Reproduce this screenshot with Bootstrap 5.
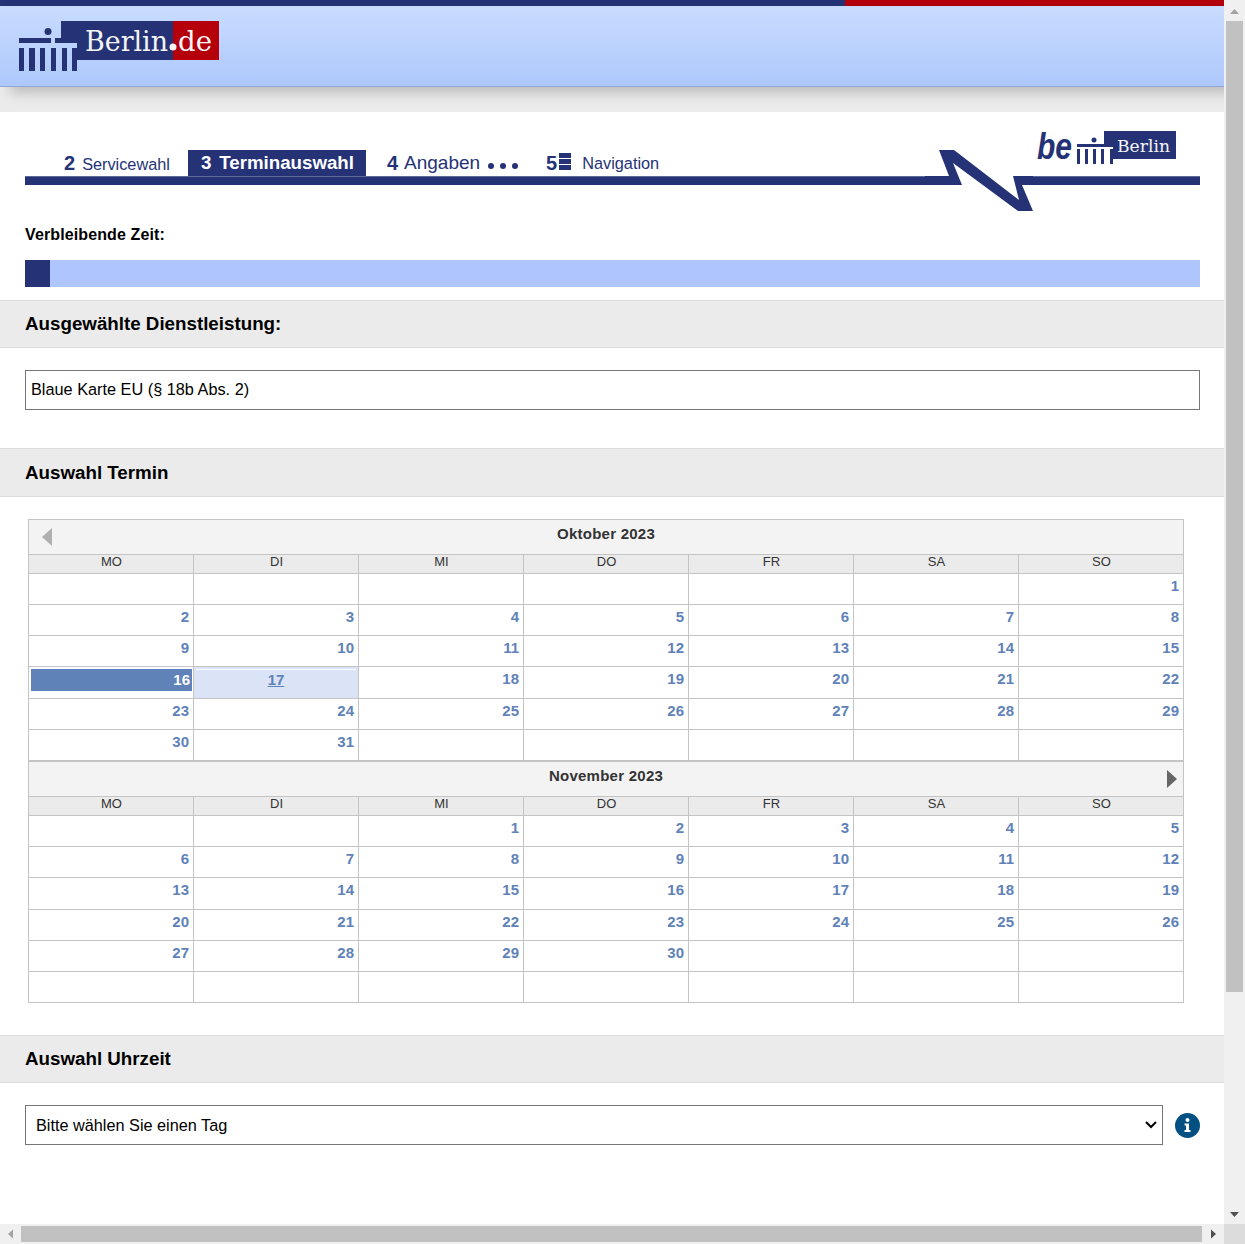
<!DOCTYPE html>
<html lang="de">
<head>
    <meta charset="UTF-8">
    <meta name="viewport" content="width=device-width, initial-scale=1.0">
    <link href="https://cdn.jsdelivr.net/npm/bootstrap@5.3.3/dist/css/bootstrap.min.css" rel="stylesheet">
    <script src="https://cdn.jsdelivr.net/npm/bootstrap@5.3.3/dist/js/bootstrap.bundle.min.js"></script>
    <title>Terminauswahl</title>
    <style>
        html, body { height: 100%; overflow: hidden; }
        body { font-family: "Liberation Sans", Arial, sans-serif; font-size: 16px; color: #000; }
        .shell { width: 1245px; height: 1244px; }
        .viewport { width: 1224px; height: 1224px; overflow: hidden; }

        .vbar { width: 21px; height: 1224px; background: #f0f0f0; }
        .hbar { height: 20px; background: #f0f0f0; }
        .vthumb { width: 17px; height: 971px; margin-left: 2px; background: #c1c1c1; }
        .hthumb { width: 1181px; height: 16px; margin-top: 2px; background: #c1c1c1; }
        .sb-arrow { width: 21px; height: 21px; flex-shrink: 0; }
        .sb-corner { width: 21px; height: 20px; background: #dcdcdc; }

        .stripe { height: 6px; }
        .stripe-blue { width: 845px; background: #253376; }
        .stripe-red { background: #b5000c; }
        .top-head { height: 81px; padding: 15px 0 0 18px; background: linear-gradient(#c9dcff, #adc8fb); border-bottom: 1px solid #8fa8d6; box-shadow: 10px 6px 12px rgba(0,0,0,.2); position: relative; }
        .grey-strip { height: 25px; background: #ebebeb; }

        .steps-area { height: 109px; padding: 38px 24px 0 25px; position: relative; }
        .step-row { height: 26px; padding-left: 39px; color: #253376; white-space: nowrap; }
        .step-num { font-size: 20px; font-weight: 700; line-height: 26px; }
        .step-lbl { font-size: 16.3px; line-height: 28px; }
        .step-active { width: 178px; height: 26px; margin-left: 18px; padding-left: 13px; background: #253376; color: #fff; font-size: 18.7px; font-weight: 700; line-height: 26px; }
        .step-active-txt { margin-left: 8px; }
        .step-big { font-size: 19px; line-height: 26px; }
        .gap-lbl { margin-left: 7px; }
        .gap-four { margin-left: 21px; }
        .gap-ang { margin-left: 6px; }
        .gap-dots { margin-left: 8px; padding-top: 6px; }
        .gap-five { margin-left: 28px; }
        .gap-stack { margin-left: 2px; padding-top: 3px; }
        .gap-nav { margin-left: 11px; line-height: 26px; }
        .dots { gap: 6px; }
        .dots i { display: block; width: 6px; height: 6px; border-radius: 50%; background: #253376; }
        .stack-ico { gap: 1px; width: 12px; }
        .stack-ico i { display: block; height: 5px; background: #253376; }
        .step-line { height: 9px; background: #253376; border-top: 1px solid #5e6a9c; }
        .step-art { position: absolute; left: 920px; top: 8px; }

        .remain-lbl { padding-left: 25px; font-weight: 700; line-height: 20px; margin-top: 4px; letter-spacing: .12px; }
        .remain-bar { height: 27px; margin: 15px 24px 0 25px; background: #aec6fc; }
        .remain-fill { width: 25px; height: 27px; background: #253376; }

        .sect-head { background: #ebebeb; border-top: 1px solid #ddd; border-bottom: 1px solid #ddd; padding: 0 0 0 25px; font-size: 18.75px; font-weight: 700; display: flex; align-items: center; }
        .sect-1 { height: 48px; margin-top: 13px; }
        .sect-2 { height: 49px; margin-top: 38px; padding-top: 2px; }
        .sect-3 { height: 48px; margin-top: 32px; }

        .svc-box { height: 40px; width: 1175px; margin: 22px 0 0 25px; padding: 0 5px 2px; border: 1px solid #767676; border-radius: 0; font-size: 16.3px; color: #000; }
        .cal-wrap { width: 1156px; margin: 22px 0 0 28px; }
        .cal-title { height: 35px; background: #f3f3f3; border: 1px solid #c4c4c4; border-bottom: 0; padding: 0 0 0 13px; }
        .cal-month { font-size: 15px; font-weight: 700; color: #333; letter-spacing: .25px; padding: 0 0 5px 0; margin-right: 23px; }
        .cal-side { width: 10px; }
        .cal-side-r { width: 16px; margin-left: -16px; }
        .cal-table { table-layout: fixed; width: 1156px; border-collapse: collapse; margin: 0; }
        .cal-table th { height: 19px; padding: 0 0 5px 1px; background: #ebebeb; border: 1px solid #c4c4c4; font-size: 13px; font-weight: 400; color: #333; text-align: center; line-height: 12px; }
        .cal-table td { height: 31px; padding: 0 4px 7px 0; border: 1px solid #c4c4c4; text-align: right; vertical-align: middle; font-size: 15px; font-weight: 700; color: #5f82b8; line-height: 16px; }
        .cal-table tr.row-tall td { height: 32px; }
        .cal-table td.day-sel { padding: 2px 1px 0 2px; vertical-align: top; }
        .day-sel span { display: block; height: 22px; padding-right: 2px; line-height: 22px; background: #5f82b8; color: #fff; }
        .cal-table td.day-free { background: #dbe3f7; text-align: center; padding: 2px 0 0; vertical-align: top; }
        .day-free a { display: block; color: #5f82b8; border-top: 1px solid #fff; margin: 0 2px; line-height: 20px; }

        .time-row { padding: 22px 24px 0 25px; gap: 12px; }
        .time-sel { width: 1138px; height: 40px; padding: 0 30px 0 10px; border: 1px solid #767676; border-radius: 0; font-size: 16.25px; color: #000; background-image: url("data:image/svg+xml,%3csvg xmlns='http://www.w3.org/2000/svg' viewBox='0 0 12 8'%3e%3cpath fill='none' stroke='%23000' stroke-width='2' d='M1 1l5 5 5-5'/%3e%3c/svg%3e"); background-size: 12px 8px; background-position: right 5px center; }
    </style>
</head>
<body>
<div class="shell d-flex flex-column">
  <div class="d-flex">
    <div class="viewport">
      <div class="d-flex">
        <div class="stripe stripe-blue"></div>
        <div class="stripe stripe-red flex-grow-1"></div>
      </div>
      <header class="top-head">
        <svg width="202" height="50" viewBox="18 21 202 50" role="img" aria-label="Berlin.de">
          <path fill="#253376" d="M61 21H173V60H77V43H55V38H61Z"/>
          <rect x="173" y="21" width="46" height="39" fill="#b5000c"/>
          <circle cx="48" cy="31.5" r="3.5" fill="#253376"/>
          <rect x="19" y="38" width="32" height="5" fill="#253376"/>
          <path fill="#253376" d="M19 48h5v23h-5zM29 48h6v23h-6zM40 48h5v23h-5zM51 48h5v23h-5zM62 48h5v23h-5zM72 48h5v23h-5z"/>
          <text x="85" y="51" font-family="'DejaVu Serif', serif" font-size="28" textLength="83" lengthAdjust="spacingAndGlyphs" fill="#f4f4f4">Berlin</text>
          <circle cx="173" cy="47" r="3.5" fill="#f4f4f4"/>
          <text x="178" y="51" font-family="'DejaVu Serif', serif" font-size="28" textLength="34" lengthAdjust="spacingAndGlyphs" fill="#f4f4f4">de</text>
        </svg>
      </header>
      <div class="grey-strip"></div>

      <div class="steps-area">
        <div class="step-row d-flex">
          <span class="step-num">2</span>
          <span class="step-lbl gap-lbl">Servicewahl</span>
          <span class="step-active">3<span class="step-active-txt">Terminauswahl</span></span>
          <span class="step-num gap-four">4</span>
          <span class="step-big gap-ang">Angaben</span>
          <span class="dots d-flex align-items-center gap-dots"><i></i><i></i><i></i></span>
          <span class="step-num gap-five">5</span>
          <span class="stack-ico d-flex flex-column gap-stack"><i></i><i></i><i></i></span>
          <span class="step-lbl gap-nav">Navigation</span>
        </div>
        <div class="step-line"></div>
        <svg class="step-art" width="270" height="110" viewBox="920 120 270 110">
          <rect x="940" y="175" width="93" height="11" fill="#fff"/>
          <path fill="#253376" d="M939 150H954L1019 200L1013 176H1033V185H1022L1033 211H1018L953 163L962 185H925V176H949Z"/>
          <text x="1037" y="159" font-family="'Liberation Sans', sans-serif" font-size="37" font-weight="700" font-style="italic" textLength="35" lengthAdjust="spacingAndGlyphs" fill="#253376">be</text>
          <path fill="#253376" d="M1104 131H1176V159H1113V147H1077V144H1104Z"/>
          <circle cx="1094" cy="140" r="2.5" fill="#253376"/>
          <path fill="#253376" d="M1077 149h3v15h-3zM1085 149h3v15h-3zM1093 149h3v15h-3zM1101 149h3v15h-3zM1110 149h3v15h-3z"/>
          <text x="1117" y="152" font-family="'DejaVu Serif', serif" font-size="17" textLength="53" lengthAdjust="spacingAndGlyphs" fill="#f4f4f4">Berlin</text>
        </svg>
      </div>

      <div class="remain-lbl">Verbleibende Zeit:</div>
      <div class="remain-bar"><div class="remain-fill"></div></div>

      <div class="sect-head sect-1">Ausgewählte Dienstleistung:</div>
      <input class="form-control svc-box" type="text" readonly value="Blaue Karte EU (§ 18b Abs. 2)">

      <div class="sect-head sect-2">Auswahl Termin</div>
      <div class="cal-wrap" id="calendar"></div>

      <div class="sect-head sect-3">Auswahl Uhrzeit</div>
      <div class="time-row d-flex align-items-center">
        <select class="form-select time-sel"><option>Bitte wählen Sie einen Tag</option></select>
        <svg width="25" height="25" viewBox="0 0 25 25" role="img" aria-label="Info">
          <circle cx="12.5" cy="12.5" r="12.5" fill="#005082"/>
          <circle cx="12.5" cy="7" r="2" fill="#fff"/>
          <path fill="#fff" d="M9.5 10.5H14V17H15.5V19H9.5V17H11V12.5H9.5Z"/>
        </svg>
      </div>
    </div>

    <div class="vbar d-flex flex-column">
      <svg class="sb-arrow" viewBox="0 0 21 21"><path fill="#a3a3a3" d="M10.5 9L15 14H6Z"/></svg>
      <div class="vthumb"></div>
      <div class="flex-grow-1"></div>
      <svg class="sb-arrow" viewBox="0 0 21 21"><path fill="#505050" d="M10.5 14L6 9H15Z"/></svg>
    </div>
  </div>

  <div class="hbar d-flex">
    <svg class="sb-arrow" viewBox="0 0 21 21"><path fill="#a3a3a3" d="M8 10L13 5.5V14.5Z"/></svg>
    <div class="hthumb"></div>
    <div class="flex-grow-1"></div>
    <svg class="sb-arrow" viewBox="0 0 21 21"><path fill="#505050" d="M13 10L8 5.5V14.5Z"/></svg>
    <div class="sb-corner"></div>
  </div>
</div>

<script>
    const dayNames = ['MO', 'DI', 'MI', 'DO', 'FR', 'SA', 'SO'];
    const months = [
        { title: 'Oktober 2023', offset: 6, days: 31, tall: 3 },
        { title: 'November 2023', offset: 2, days: 30, tall: 2 }
    ];
    const arrowPrev = '<svg class="d-block" width="10" height="18" viewBox="0 0 10 18"><path fill="#b0b0b0" d="M10 0V18L0 9Z"/></svg>';
    const arrowNext = '<svg class="d-block" width="10" height="18" viewBox="0 0 10 18"><path fill="#666" d="M0 0V18L10 9Z"/></svg>';

    let html = '';
    months.forEach((m, idx) => {
        html += `<div class="cal-title d-flex align-items-center">
            <span class="cal-side flex-shrink-0">${idx ? '' : arrowPrev}</span>
            <span class="cal-month flex-grow-1 text-center">${m.title}</span>
            <span class="cal-side-r flex-shrink-0">${idx ? arrowNext : ''}</span>
        </div>`;
        html += '<table class="cal-table"><thead><tr>' + dayNames.map(d => `<th>${d}</th>`).join('') + '</tr></thead><tbody>';
        for (let r = 0; r < 6; r++) {
            html += `<tr class="${r === m.tall ? 'row-tall' : ''}">`;
            for (let c = 0; c < 7; c++) {
                const day = r * 7 + c - m.offset + 1;
                if (day < 1 || day > m.days) html += '<td></td>';
                else if (idx === 0 && day === 16) html += `<td class="day-sel"><span>${day}</span></td>`;
                else if (idx === 0 && day === 17) html += `<td class="day-free"><a href="#">${day}</a></td>`;
                else html += `<td>${day}</td>`;
            }
            html += '</tr>';
        }
        html += '</tbody></table>';
    });
    document.getElementById('calendar').innerHTML = html;
</script>
</body>
</html>
